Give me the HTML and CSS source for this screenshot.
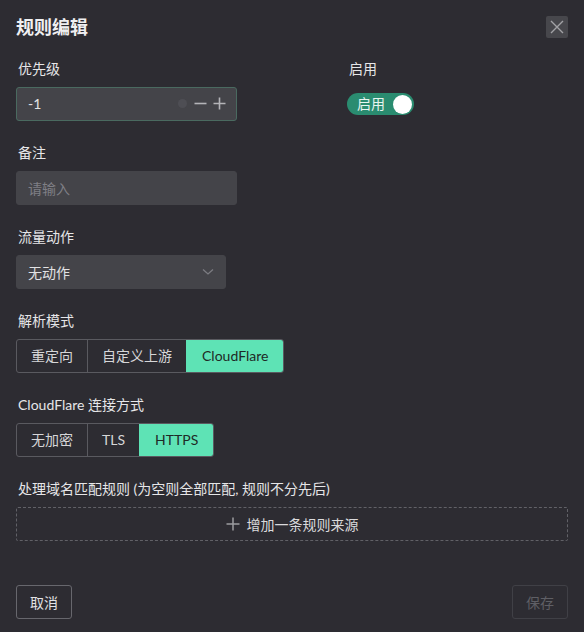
FILE: index.html
```html
<!DOCTYPE html>
<html lang="zh">
<head>
<meta charset="utf-8">
<link rel="stylesheet" href="styles.css">
</head>
<body>
<div class="dialog">
  <div class="header">
    <div class="title">规则编辑</div>
    <button class="close" aria-label="关闭">
      <svg width="14" height="14" viewBox="0 0 14 14"><path d="M1 1L13 13M13 1L1 13" stroke="#a2a2a6" stroke-width="1.4" fill="none"/></svg>
    </button>
  </div>

  <div class="row-two">
    <div class="field">
      <div class="label">优先级</div>
      <div class="input num focused">
        <span class="val">-1</span>
        <span class="num-tools">
          <span class="dot"></span>
          <svg width="13" height="13" viewBox="0 0 13 13"><path d="M0.5 6.5H12.5" stroke="#b4b4b8" stroke-width="1.6"/></svg>
          <svg width="13" height="13" viewBox="0 0 13 13"><path d="M0.5 6.5H12.5M6.5 0.5V12.5" stroke="#b4b4b8" stroke-width="1.6"/></svg>
        </span>
      </div>
    </div>
    <div class="field">
      <div class="label">启用</div>
      <div class="switch-wrap">
        <div class="switch"><span class="switch-text">启用</span><span class="knob"></span></div>
      </div>
    </div>
  </div>

  <div class="field">
    <div class="label">备注</div>
    <div class="input w221"><span class="placeholder">请输入</span></div>
  </div>

  <div class="field">
    <div class="label">流量动作</div>
    <div class="input select">
      <span class="val">无动作</span>
      <svg width="12" height="8" viewBox="0 0 12 8"><path d="M1 1.5L6 6L11 1.5" stroke="#7c7c82" stroke-width="1.3" fill="none"/></svg>
    </div>
  </div>

  <div class="field">
    <div class="label">解析模式</div>
    <div class="seg">
      <span class="seg-btn">重定向</span>
      <span class="seg-btn">自定义上游</span>
      <span class="seg-btn active">CloudFlare</span>
    </div>
  </div>

  <div class="field">
    <div class="label">CloudFlare 连接方式</div>
    <div class="seg">
      <span class="seg-btn">无加密</span>
      <span class="seg-btn latin">TLS</span>
      <span class="seg-btn active latin">HTTPS</span>
    </div>
  </div>

  <div class="field">
    <div class="label">处理域名匹配规则 (为空则全部匹配, 规则不分先后)</div>
    <div class="add-box">
      <svg width="14" height="14" viewBox="0 0 14 14"><path d="M0.5 7H13.5M7 0.5V13.5" stroke="#9c9ca0" stroke-width="1.5"/></svg>
      <span>增加一条规则来源</span>
    </div>
  </div>

  <div class="footer">
    <button class="btn">取消</button>
    <button class="btn disabled">保存</button>
  </div>
</div>
</body>
</html>
```

FILE: styles.css
```css
* { box-sizing: border-box; }
html, body {
  margin: 0;
  padding: 0;
  background: #2d2c32;
}
body {
  font-family: Lato, "Noto Sans CJK SC", sans-serif;
  font-size: 14px;
  color: #e4e4e6;
}
.dialog {
  min-height: 632px;
  padding: 16px 16px 13px 16px;
  display: flex;
  flex-direction: column;
}
.header {
  height: 22px;
  display: flex;
  align-items: center;
  justify-content: space-between;
  margin-bottom: 20px;
}
.title {
  font-size: 18px;
  font-weight: 700;
  color: #efeff1;
  line-height: 22px;
}
.close {
  width: 22px;
  height: 22px;
  border: none;
  padding: 0;
  background: #47474c;
  border-radius: 2px;
  display: flex;
  align-items: center;
  justify-content: center;
}
.row-two {
  display: grid;
  grid-template-columns: 331px 1fr;
}
.field {
  margin-bottom: 21px;
}
.label {
  line-height: 22px;
  height: 22px;
  margin-bottom: 7px;
  padding-left: 2px;
  color: #e6e6e8;
}
.input {
  height: 34px;
  background: #444449;
  border: 1px solid #444449;
  border-radius: 3px;
  display: flex;
  align-items: center;
  padding: 0 11px 1px 11px;
  color: #e2e2e4;
}
.num {
  width: 221px;
  justify-content: space-between;
  padding-right: 10px;
}
.focused {
  border-color: #4a6a60;
}
.w221 { width: 221px; }
.placeholder { color: #7f7f85; }
.num-tools {
  display: flex;
  align-items: center;
  gap: 6px;
}
.dot {
  width: 9px;
  height: 9px;
  border-radius: 50%;
  background: #4e4e54;
  margin-right: 1px;
}
.select {
  width: 210px;
  justify-content: space-between;
  padding-right: 11px;
}
.switch-wrap {
  height: 34px;
  display: flex;
  align-items: center;
}
.switch {
  width: 67px;
  height: 22px;
  border-radius: 11px;
  background: #2a8c70;
  display: flex;
  align-items: center;
  justify-content: space-between;
  padding: 0 2px 0 10px;
}
.switch-text {
  color: #e8f4f0;
  font-size: 14px;
  line-height: 22px;
}
.knob {
  width: 19px;
  height: 19px;
  border-radius: 50%;
  background: #ffffff;
}
.seg {
  display: inline-flex;
  height: 34px;
  border: 1px solid #5a5a60;
  border-radius: 3px;
  overflow: hidden;
}
.seg-btn {
  display: flex;
  align-items: center;
  padding: 0 14px;
  color: #d6d6d8;
  border-left: 1px solid #5a5a60;
  line-height: 32px;
}
.seg-btn:first-child { border-left: none; }
.seg-btn.latin { padding: 0 14px; }
.seg-btn.active {
  background: #5ee3b5;
  color: #1e2a26;
  border-left-color: #5ee3b5;
  padding: 0 15px;
}
.add-box {
  height: 34px;
  border: 1px dashed #616167;
  border-radius: 2px;
  display: flex;
  align-items: center;
  justify-content: center;
  gap: 7px;
  color: #dadadc;
}
.footer {
  margin-top: auto;
  display: flex;
  justify-content: space-between;
}
.btn {
  height: 34px;
  width: 56px;
  background: transparent;
  border: 1px solid #67676d;
  border-radius: 3px;
  color: #e2e2e4;
  font-family: Lato, "Noto Sans CJK SC", sans-serif;
  font-size: 14px;
  padding: 0;
}
.btn.disabled {
  border-color: #404046;
  color: #5f5f65;
}
```
